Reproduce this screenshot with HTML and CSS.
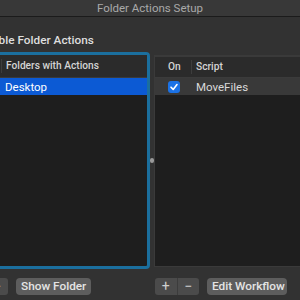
FILE: index.html
```html
<!DOCTYPE html>
<html lang="en">
<head>
    <meta charset="UTF-8">
    <title>Folder Actions Setup</title>
    <link rel="stylesheet" href="styles.css">
</head>
<body>
    <div class="window">
        <div class="titlebar">Folder Actions Setup</div>

        <!-- enable checkbox, partly cut off on the left -->
        <div class="enable">
            <span class="enable-box"></span>
            <span>Enable Folder Actions</span>
        </div>

        <div class="panes">
            <!-- folders list, has focus -->
            <div class="pane left focused">
                <div class="table-head">
                    <div class="col col-check"></div>
                    <div class="col col-name">Folders with Actions</div>
                </div>
                <div class="row selected">
                    <div class="col col-check"></div>
                    <div class="col col-name">Desktop</div>
                </div>
            </div>

            <div class="splitter"><span class="dot"></span></div>

            <!-- scripts attached to the folder -->
            <div class="pane right">
                <div class="table-head">
                    <div class="col col-on">On</div>
                    <div class="col col-script">Script</div>
                </div>
                <div class="row inactive">
                    <div class="col col-on">
                        <span class="checkbox">
                            <svg width="10" height="10" viewBox="0 0 10 10"><path d="M2 5.2 L4.2 7.4 L8 2.6" fill="none" stroke="#fff" stroke-width="1.6" stroke-linecap="round" stroke-linejoin="round"/></svg>
                        </span>
                    </div>
                    <div class="col col-script">MoveFiles</div>
                </div>
            </div>
        </div>

        <div class="buttons">
            <div class="left-buttons">
                <div class="segmented">
                    <span class="seg">+</span>
                    <span class="seg">&minus;</span>
                </div>
                <button class="btn">Show Folder</button>
            </div>
            <div class="right-buttons">
                <div class="segmented">
                    <span class="seg">+</span>
                    <span class="seg">&minus;</span>
                </div>
                <button class="btn">Edit Workflow</button>
            </div>
        </div>
    </div>
</body>
</html>
```

FILE: styles.css
```css
body {
    margin: 0;
    background-color: #323232;
    font-family: Roboto, "Liberation Sans", sans-serif;
}
.window {
    width: 300px;
    height: 300px;
    overflow: hidden;
    background-color: #323232;
    display: flex;
    flex-direction: column;
}
.titlebar {
    height: 16px;
    line-height: 16px;
    text-align: center;
    font-size: 11.5px;
    color: #a9a9a9;
    background-color: #383838;
    border-bottom: 1px solid #1b1b1b;
}
.enable {
    display: flex;
    align-items: center;
    gap: 6px;
    margin-left: -39px;
    height: 35px;
    padding-top: 16px;
    padding-bottom: 5px;
    box-sizing: border-box;
    font-size: 11.8px;
    font-weight: 500;
    color: #dedede;
    line-height: 14px;
    white-space: nowrap;
}
.enable-box {
    width: 12px;
    height: 12px;
    border-radius: 3px;
    background-color: #555;
}
.panes {
    display: flex;
    height: 217px;
    margin-left: -20px;
}
.pane {
    background-color: #1e1e1e;
    box-sizing: border-box;
}
.pane.left {
    width: 170px;
    border: 3px solid #1b6f9e;
    border-radius: 4px;
}
.pane.right {
    flex: 1;
    margin-top: 3px;
    margin-bottom: 2px;
    border: 1px solid #3a3a3a;
    border-right: none;
}
.splitter {
    width: 4px;
    display: flex;
    align-items: center;
    justify-content: center;
}
.splitter .dot {
    width: 4px;
    height: 5px;
    border-radius: 2px;
    background-color: #9a9a9a;
}
.table-head {
    display: flex;
    align-items: center;
    height: 23px;
    background-color: #2b2b2b;
    border-bottom: 1px solid #3b3b3b;
    font-size: 10.2px;
    font-weight: 500;
    color: #d4d4d4;
    box-sizing: border-box;
    white-space: nowrap;
}
.pane.right .table-head {
    height: 22px;
    border-top: 1px solid #3a3a3a;
}
.table-head .col {
    border-right: 1px solid #3d3d3d;
    height: 14px;
    line-height: 14px;
}
.table-head .col:last-child {
    border-right: none;
}
.row {
    display: flex;
    align-items: center;
    height: 17px;
    font-size: 11.5px;
    white-space: nowrap;
}
.row.selected {
    background-color: #0c5ad4;
    color: #fff;
}
.row.inactive {
    background-color: #393939;
    color: #d9d9d9;
}
.col-check {
    width: 18px;
}
.col-name {
    padding-left: 4px;
}
.col-on {
    width: 37px;
    padding-left: 13px;
    box-sizing: border-box;
    display: flex;
    align-items: center;
}
.col-script {
    padding-left: 4px;
}
.checkbox {
    width: 12px;
    height: 12px;
    border-radius: 3px;
    background-color: #1b72e6;
    display: flex;
    align-items: center;
    justify-content: center;
}
.buttons {
    display: flex;
    margin-top: 9px;
    height: 17px;
    margin-left: -36px;
}
.left-buttons, .right-buttons {
    display: flex;
    gap: 8px;
}
.left-buttons {
    width: 191px;
}
.segmented {
    display: flex;
    width: 44px;
    height: 17px;
    background-color: #4b4b4b;
    border-radius: 3px;
}
.seg {
    flex: 1;
    display: flex;
    align-items: center;
    justify-content: center;
    color: #cfcfcf;
    font-size: 14px;
    line-height: 17px;
}
.seg:first-child {
    border-right: 1px solid #3c3c3c;
}
.btn {
    height: 17px;
    padding: 0 5px;
    border: none;
    border-radius: 4px;
    background-color: #5d5d5d;
    color: #e4e4e4;
    font-family: Roboto, "Liberation Sans", sans-serif;
    font-size: 11.8px;
    font-weight: 500;
    line-height: 17px;
    white-space: nowrap;
}
.left-buttons .btn {
    width: 75px;
}
.right-buttons .btn {
    width: 80px;
}
```
